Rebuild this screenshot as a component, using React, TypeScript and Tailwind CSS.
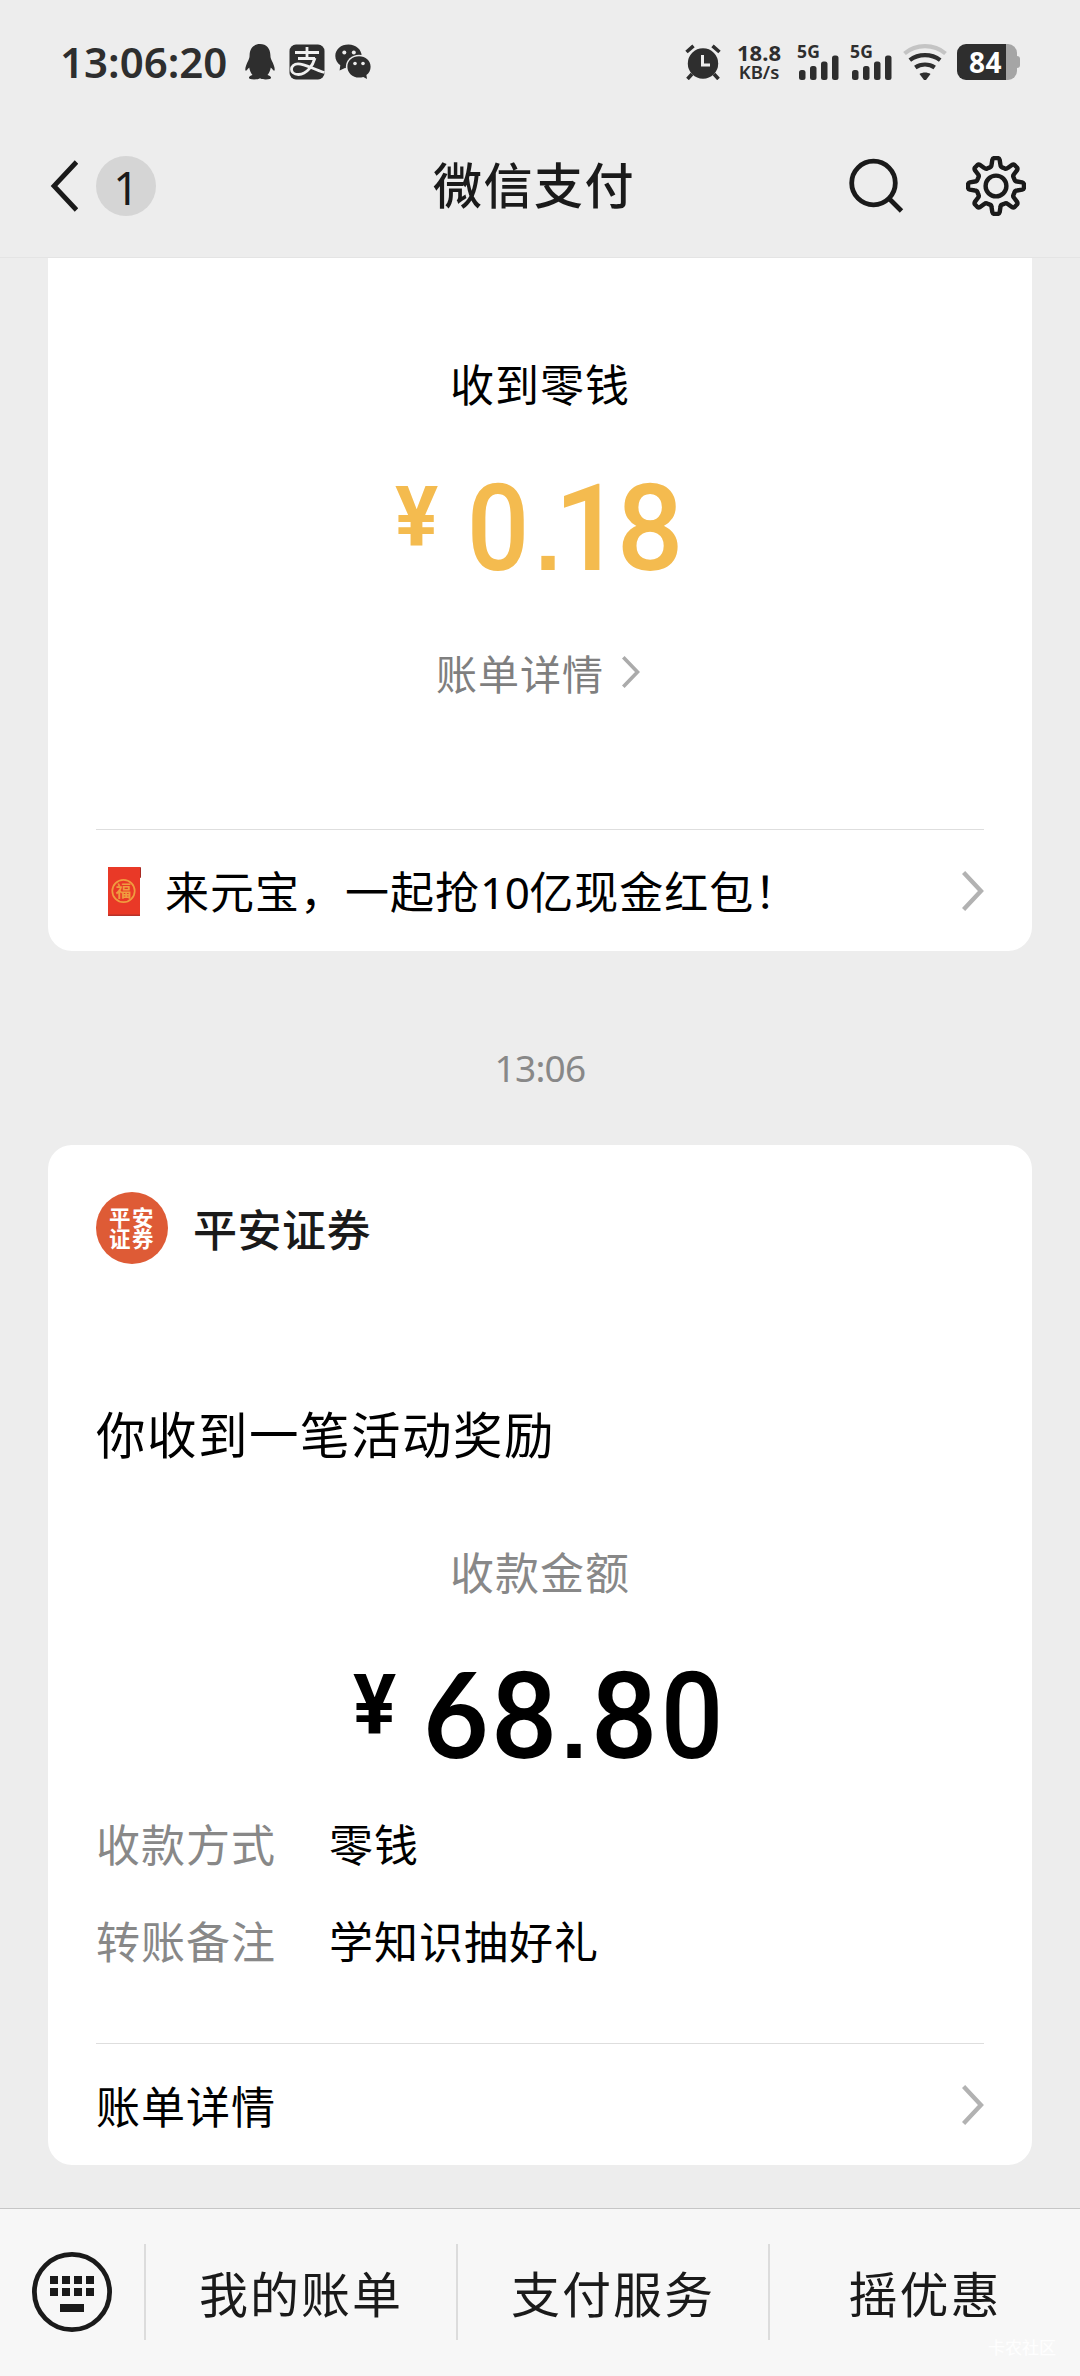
import React from "react";

const point = (deg: number, r: number) => {
  const a = ((deg - 90) * Math.PI) / 180;
  return `${(30 + r * Math.cos(a)).toFixed(2)} ${(30 + r * Math.sin(a)).toFixed(2)}`;
};

// Eight-tooth gear outline with softly curved valleys.
const gearPath =
  Array.from({ length: 8 }, (_, k) => {
    const a = k * 45;
    return [
      `${k === 0 ? "M" : "L"}${point(a - 18, 19.6)}`,
      `Q${point(a - 13.5, 19.6)} ${point(a - 12, 21.5)}`,
      `L${point(a - 8, 26.4)}`,
      `Q${point(a - 6.5, 28)} ${point(a - 3.5, 28)}`,
      `L${point(a + 3.5, 28)}`,
      `Q${point(a + 6.5, 28)} ${point(a + 8, 26.4)}`,
      `L${point(a + 12, 21.5)}`,
      `Q${point(a + 13.5, 19.6)} ${point(a + 18, 19.6)}`,
    ].join(" ");
  }).join(" ") + " Z";

function Penguin() {
  return (
    <svg width="30" height="36" viewBox="0 0 30 36" fill="#2e2e2e">
      <path d="M15 0C8.500 0 4.800 4.600 4.600 11c0 2-.3 3.400-1.300 5.500C1.500 20 .3 23 .3 25.500c0 1.400.8 1.600 1.600.6l2.300-2.600c.6 3.200 1.700 5.500 3.300 7.600-2.200.6-3.600 1.600-3.600 2.700 0 1.200 2 1.600 5.400 1.600 2.600 0 4.600-.4 5.700-1.200 1.100.8 3.100 1.200 5.700 1.200 3.400 0 5.400-.4 5.400-1.600 0-1.100-1.400-2.100-3.600-2.700 1.600-2.100 2.700-4.400 3.300-7.600l2.300 2.600c.8 1 1.600.8 1.600-.6 0-2.500-1.200-5.500-3-9-1-2.100-1.300-3.500-1.300-5.500C25.200 4.600 21.500 0 15 0z" />
    </svg>
  );
}

function Alipay() {
  return (
    <svg width="36" height="36" viewBox="0 0 36 36">
      <rect x=".5" y=".5" width="35" height="35" rx="6.500" fill="#2e2e2e" />
      <g fill="none" stroke="#f0f0f0" strokeWidth="2.800" strokeLinejoin="round">
        <path d="M6 8.500H30M18 3V14.500M9 14.500H26" />
        <path d="M26 14C24 21 18 30.500 9.500 30.500C4.500 30.500 2.500 27.800 2.500 25.200C2.500 22.500 5 19.800 9 19.800C17 19.800 24 25.500 35.500 28.500" />
      </g>
    </svg>
  );
}

function Wechat() {
  return (
    <svg width="36" height="36" viewBox="0 0 36 36">
      <path d="M13.500.5C6 .5.3 5.300.3 12c0 4 2 7 5 9.200L4.600 26.500l5.400-2.600c1.200.3 2.300.4 3.500.4C21 24.300 26.700 19 26.700 12.300 26.700 5.600 21 .5 13.500.5z" fill="#2e2e2e" />
      <ellipse cx="24" cy="23" rx="13.200" ry="12.200" fill="#ededed" />
      <path d="M24 12.200c-6.600 0-11.600 4.500-11.600 10.500S17.400 33.600 24 33.600c1.600 0 3-.2 4.300-.7l3.700 2-.6-3.800c2.700-2 4.200-5 4.200-8.400 0-6-5-10.500-11.600-10.500z" fill="#2e2e2e" />
      <g fill="#ededed">
        <circle cx="9.300" cy="8.500" r="2" />
        <circle cx="18.800" cy="8.500" r="2" />
        <circle cx="20" cy="19.500" r="1.800" />
        <circle cx="28" cy="19.500" r="1.800" />
      </g>
    </svg>
  );
}

function Alarm() {
  return (
    <svg width="36" height="36" viewBox="0 0 36 36" fill="none" stroke="#2e2e2e" strokeWidth="3.600">
      <circle cx="18" cy="19.500" r="15.200" fill="#2e2e2e" stroke="none" />
      <path d="M1.500 8L8.500 1.800M27.500 1.800L34.500 8" />
      <path d="M7 30L2.500 35M29 30L33.500 35" />
      <path d="M17.500 11V21H25" stroke="#ededed" strokeWidth="3" />
    </svg>
  );
}

function Signal() {
  return (
    <div className="relative h-9 w-[42px]">
      <span className="absolute -top-[1px] left-0 font-['Noto_Sans'] text-[17.500px] leading-[17px] font-bold tracking-[0.3px]">5G</span>
      <svg className="absolute top-0 left-0" width="42" height="36" viewBox="0 0 42 36" fill="#2e2e2e">
        <rect x="2" y="26" width="6.500" height="10" rx="2.500" />
        <rect x="13" y="22" width="6.500" height="14" rx="2.500" />
        <rect x="24" y="17.500" width="6.500" height="18.500" rx="2.500" />
        <rect x="35" y="11.500" width="6.500" height="24.500" rx="2.500" />
      </svg>
    </div>
  );
}

function Wifi() {
  return (
    <svg width="44" height="36" viewBox="0 0 44 36" fill="none" strokeWidth="4.200">
      <path d="M1.500 9.500C13 -.3 31 -.3 42.500 9.500" stroke="#c4c4c4" />
      <path d="M6.800 16.200C15.500 9.500 28.500 9.500 37.200 16.200" stroke="#2e2e2e" />
      <path d="M12.300 23.400C18 19.500 26 19.500 31.700 23.400" stroke="#2e2e2e" />
      <path d="M16.500 30C19.500 28 24.500 28 27.500 30L23 36H21Z" fill="#2e2e2e" stroke="none" />
    </svg>
  );
}

function Battery() {
  return (
    <div className="flex items-center">
      <div className="flex h-9 w-[60px] items-center overflow-hidden rounded-[9px] bg-[linear-gradient(to_right,#2e2e2e_49px,#a5a5a5_49px)] pl-3">
        <span className="font-['Noto_Sans'] text-[28px] leading-9 font-bold tracking-[0.500px] text-white">84</span>
      </div>
      <div className="h-3 w-[3px] rounded-r-sm bg-[#a5a5a5]" />
    </div>
  );
}

function Chevron({ w, h, stroke, color = "#b2b2b2" }: { w: number; h: number; stroke: number; color?: string }) {
  const e = stroke * 0.36;
  return (
    <svg width={w} height={h} viewBox={`0 0 ${w} ${h}`} fill="none" stroke={color} strokeWidth={stroke} className="shrink-0">
      <path d={`M${e} ${e}L${w - stroke * 0.7} ${h / 2}L${e} ${h - e}`} />
    </svg>
  );
}

// Per-glyph tuning that gives the amounts a condensed, DIN-like rhythm.
const glyphClass: Record<string, string> = {
  "0": "justify-center w-[68px] scale-x-[0.91]",
  "1": "justify-start w-[52px] -translate-x-[10px]",
  "6": "justify-center w-[68px] scale-x-[0.94] font-['Lato'] text-[119px] leading-[88px] font-bold",
  "8": "justify-center w-[68px] scale-x-[0.97]",
  ".": "justify-center w-8 font-['Liberation_Sans'] text-[94px] font-bold",
};

function Amount({ value }: { value: string }) {
  return (
    <div className="flex h-[100px] justify-center font-['Roboto'] leading-[100px] font-medium">
      <span className="-mt-[11px] mr-6 w-[44px] text-[84px] font-bold">
        <span className="-ml-[2px] inline-block w-12 scale-x-[0.96]">¥</span>
      </span>
      <div className="flex items-baseline text-[121px]">
        {value.split("").map((c, i) => (
          <span key={i} className={`flex ${glyphClass[c] ?? ""}`}>
            {c}
          </span>
        ))}
      </div>
    </div>
  );
}

function Field({ label, value }: { label: string; value: string }) {
  return (
    <div className="flex h-[60px] text-[44px] leading-[60px] tracking-[1px]">
      <span className="w-[233px] text-[#888888]">{label}</span>
      <span>{value}</span>
    </div>
  );
}

function Keyboard() {
  return (
    <svg width="80" height="80" viewBox="0 0 80 80" fill="#1a1a1a">
      <circle cx="40" cy="40" r="37.600" fill="none" stroke="#1a1a1a" strokeWidth="4.800" />
      {[24, 36].map((y) => [18, 30, 42, 54].map((x) => <rect key={`${x}-${y}`} x={x} y={y} width="8" height="8" />))}
      <rect x="28" y="52" width="24" height="8" />
    </svg>
  );
}

export default function App() {
  return (
    <div className="flex h-[2376px] w-[1080px] flex-col overflow-hidden bg-[#ededed] font-['Noto_Sans_CJK_SC',sans-serif] text-black">
      <header className="flex h-[258px] shrink-0 flex-col border-b border-[#e4e4e4]">
        <div className="mt-11 flex h-9 justify-between px-[60px] text-[#2e2e2e]">
          <div className="flex items-center">
            <span className="w-[185px] font-['Noto_Sans'] text-[42px] leading-9 font-semibold">13:06:20</span>
            <Penguin />
            <div className="ml-[14px] flex gap-[10px]">
              <Alipay />
              <Wechat />
            </div>
          </div>
          <div className="flex items-center">
            <Alarm />
            <div className="ml-[15px] flex w-[46px] flex-col items-center font-['Noto_Sans'] leading-[19px] font-bold">
              <span className="text-[22px]">18.8</span>
              <span className="text-[18.500px] font-semibold">KB/s</span>
            </div>
            <div className="ml-[15px] flex gap-[11px]">
              <Signal />
              <Signal />
            </div>
            <div className="mr-[10px] ml-[11px]">
              <Wifi />
            </div>
            <Battery />
          </div>
        </div>
        <div className="mt-[76px] grid h-[60px] grid-cols-3 items-center pr-[54px] pl-[50px]">
          <div className="flex items-center gap-[18px]">
            <svg width="28" height="52" viewBox="0 0 28 52" fill="none" stroke="#1a1a1a" strokeWidth="4.800">
              <path d="M26.500 2L4 26L26.500 50" />
            </svg>
            <span className="flex size-[60px] items-center justify-center rounded-full bg-[#d5d5d5] pt-[3px] font-['Noto_Sans'] text-[45px] leading-[57px] text-[#1a1a1a]">1</span>
          </div>
          <h1 className="-mt-[6px] mr-2 text-center text-[49px] leading-[60px] font-medium tracking-[1.500px] whitespace-nowrap text-[#1a1a1a]">微信支付</h1>
          <div className="flex items-center justify-end gap-[62px]">
            <svg width="56" height="56" viewBox="0 0 56 56" fill="none" stroke="#1a1a1a" strokeWidth="4.800">
              <circle cx="25.500" cy="25" r="21.800" />
              <path d="M41 40.500L53.500 53" />
            </svg>
            <svg width="60" height="60" viewBox="0 0 60 60" fill="none" stroke="#1a1a1a" strokeWidth="4.400" strokeLinejoin="round">
              <path d={gearPath} />
              <circle cx="30" cy="30" r="10.400" />
            </svg>
          </div>
        </div>
      </header>

      <main className="flex grow flex-col px-12">
        <section className="flex flex-col rounded-b-[24px] bg-white px-12">
          <p className="mt-[95px] h-[60px] text-center text-[44px] leading-[60px] tracking-[1px]">收到零钱</p>
          <div className="mt-[66px] text-[#f4bb4f]">
            <Amount value="0.18" />
          </div>
          <div className="mt-[63px] flex h-[60px] items-center justify-center gap-[18px] pr-1 text-[41px] leading-[60px] tracking-[1px] text-[#7f7f7f]">
            <span>账单详情</span>
            <Chevron w={18} h={32} stroke={3.6} color="#ababab" />
          </div>
          <div className="mt-[127px] flex h-[122px] items-center border-t border-[#dedede]">
            <svg className="mt-[3px] ml-3" width="34" height="50" viewBox="0 0 34 50">
              <rect x="29" y="0" width="4" height="11" rx="1" fill="#a82a24" />
              <rect x="0" y="0" width="32" height="49" fill="#e93927" />
              <rect x="0" y="47.500" width="32" height="1.500" fill="#b8322a" />
              <circle cx="15.500" cy="24" r="11.200" fill="none" stroke="#f09c3f" strokeWidth="1.700" />
              <text x="15.500" y="29.600" textAnchor="middle" fontSize="15.500" fontWeight="700" fill="#f09c3f">福</text>
            </svg>
            <span className="ml-[23px] text-[44px] tracking-[1px] whitespace-nowrap">
              来元宝，一起抢<span className="font-['Noto_Sans'] tracking-[-0.500px]">10</span>亿现金红包！
            </span>
            <span className="ml-auto">
              <Chevron w={22} h={40} stroke={4.4} />
            </span>
          </div>
        </section>

        <time className="mt-[97px] mb-[57px] block h-10 text-center font-['Noto_Sans'] text-[37px] leading-10 tracking-[-0.700px] text-[#888888]">13:06</time>

        <section className="flex flex-col rounded-[24px] bg-white px-12 pt-[47px]">
          <div className="flex h-[72px] items-center gap-[25px]">
            <div className="flex size-[72px] flex-col items-center justify-center rounded-full bg-[#de5b36] pb-[2px] text-[21.500px] leading-[21px] font-bold tracking-[1.500px] text-white">
              <span>平安</span>
              <span>证券</span>
            </div>
            <span className="-mt-[1px] text-[44px] leading-[60px] font-medium tracking-[0.500px] text-[#1a1a1a]">平安证券</span>
          </div>
          <h2 className="mt-[139px] h-[60px] text-[49.500px] leading-[60px] tracking-[1.500px]">你收到一笔活动奖励</h2>
          <p className="mt-[78px] h-[60px] text-center text-[44px] leading-[60px] tracking-[1px] text-[#888888]">收款金额</p>
          <div className="mt-[66px]">
            <Amount value="68.80" />
          </div>
          <div className="mt-[46px] flex flex-col gap-[37px]">
            <Field label="收款方式" value="零钱" />
            <Field label="转账备注" value="学知识抽好礼" />
          </div>
          <div className="mt-[73px] flex h-[122px] items-center justify-between border-t border-[#dedede] text-[44px] tracking-[1px]">
            <span>账单详情</span>
            <Chevron w={22} h={40} stroke={4.4} />
          </div>
        </section>
      </main>

      <footer className="relative flex h-[168px] shrink-0 border-t border-[#c6c6c6] bg-[#f7f7f7] pt-[35px] text-[#1a1a1a]">
        <div className="flex h-24 w-36 items-center justify-center">
          <Keyboard />
        </div>
        {["我的账单", "支付服务", "摇优惠"].map((t) => (
          <div key={t} className="flex h-24 w-[312px] items-center justify-center border-l-2 border-[#dcdcdc] text-[49px] tracking-[2px]">
            <span>{t}</span>
          </div>
        ))}
        <span className="absolute right-6 bottom-[19px] text-[17px] leading-5 text-white/90">卡农社区</span>
      </footer>
    </div>
  );
}
